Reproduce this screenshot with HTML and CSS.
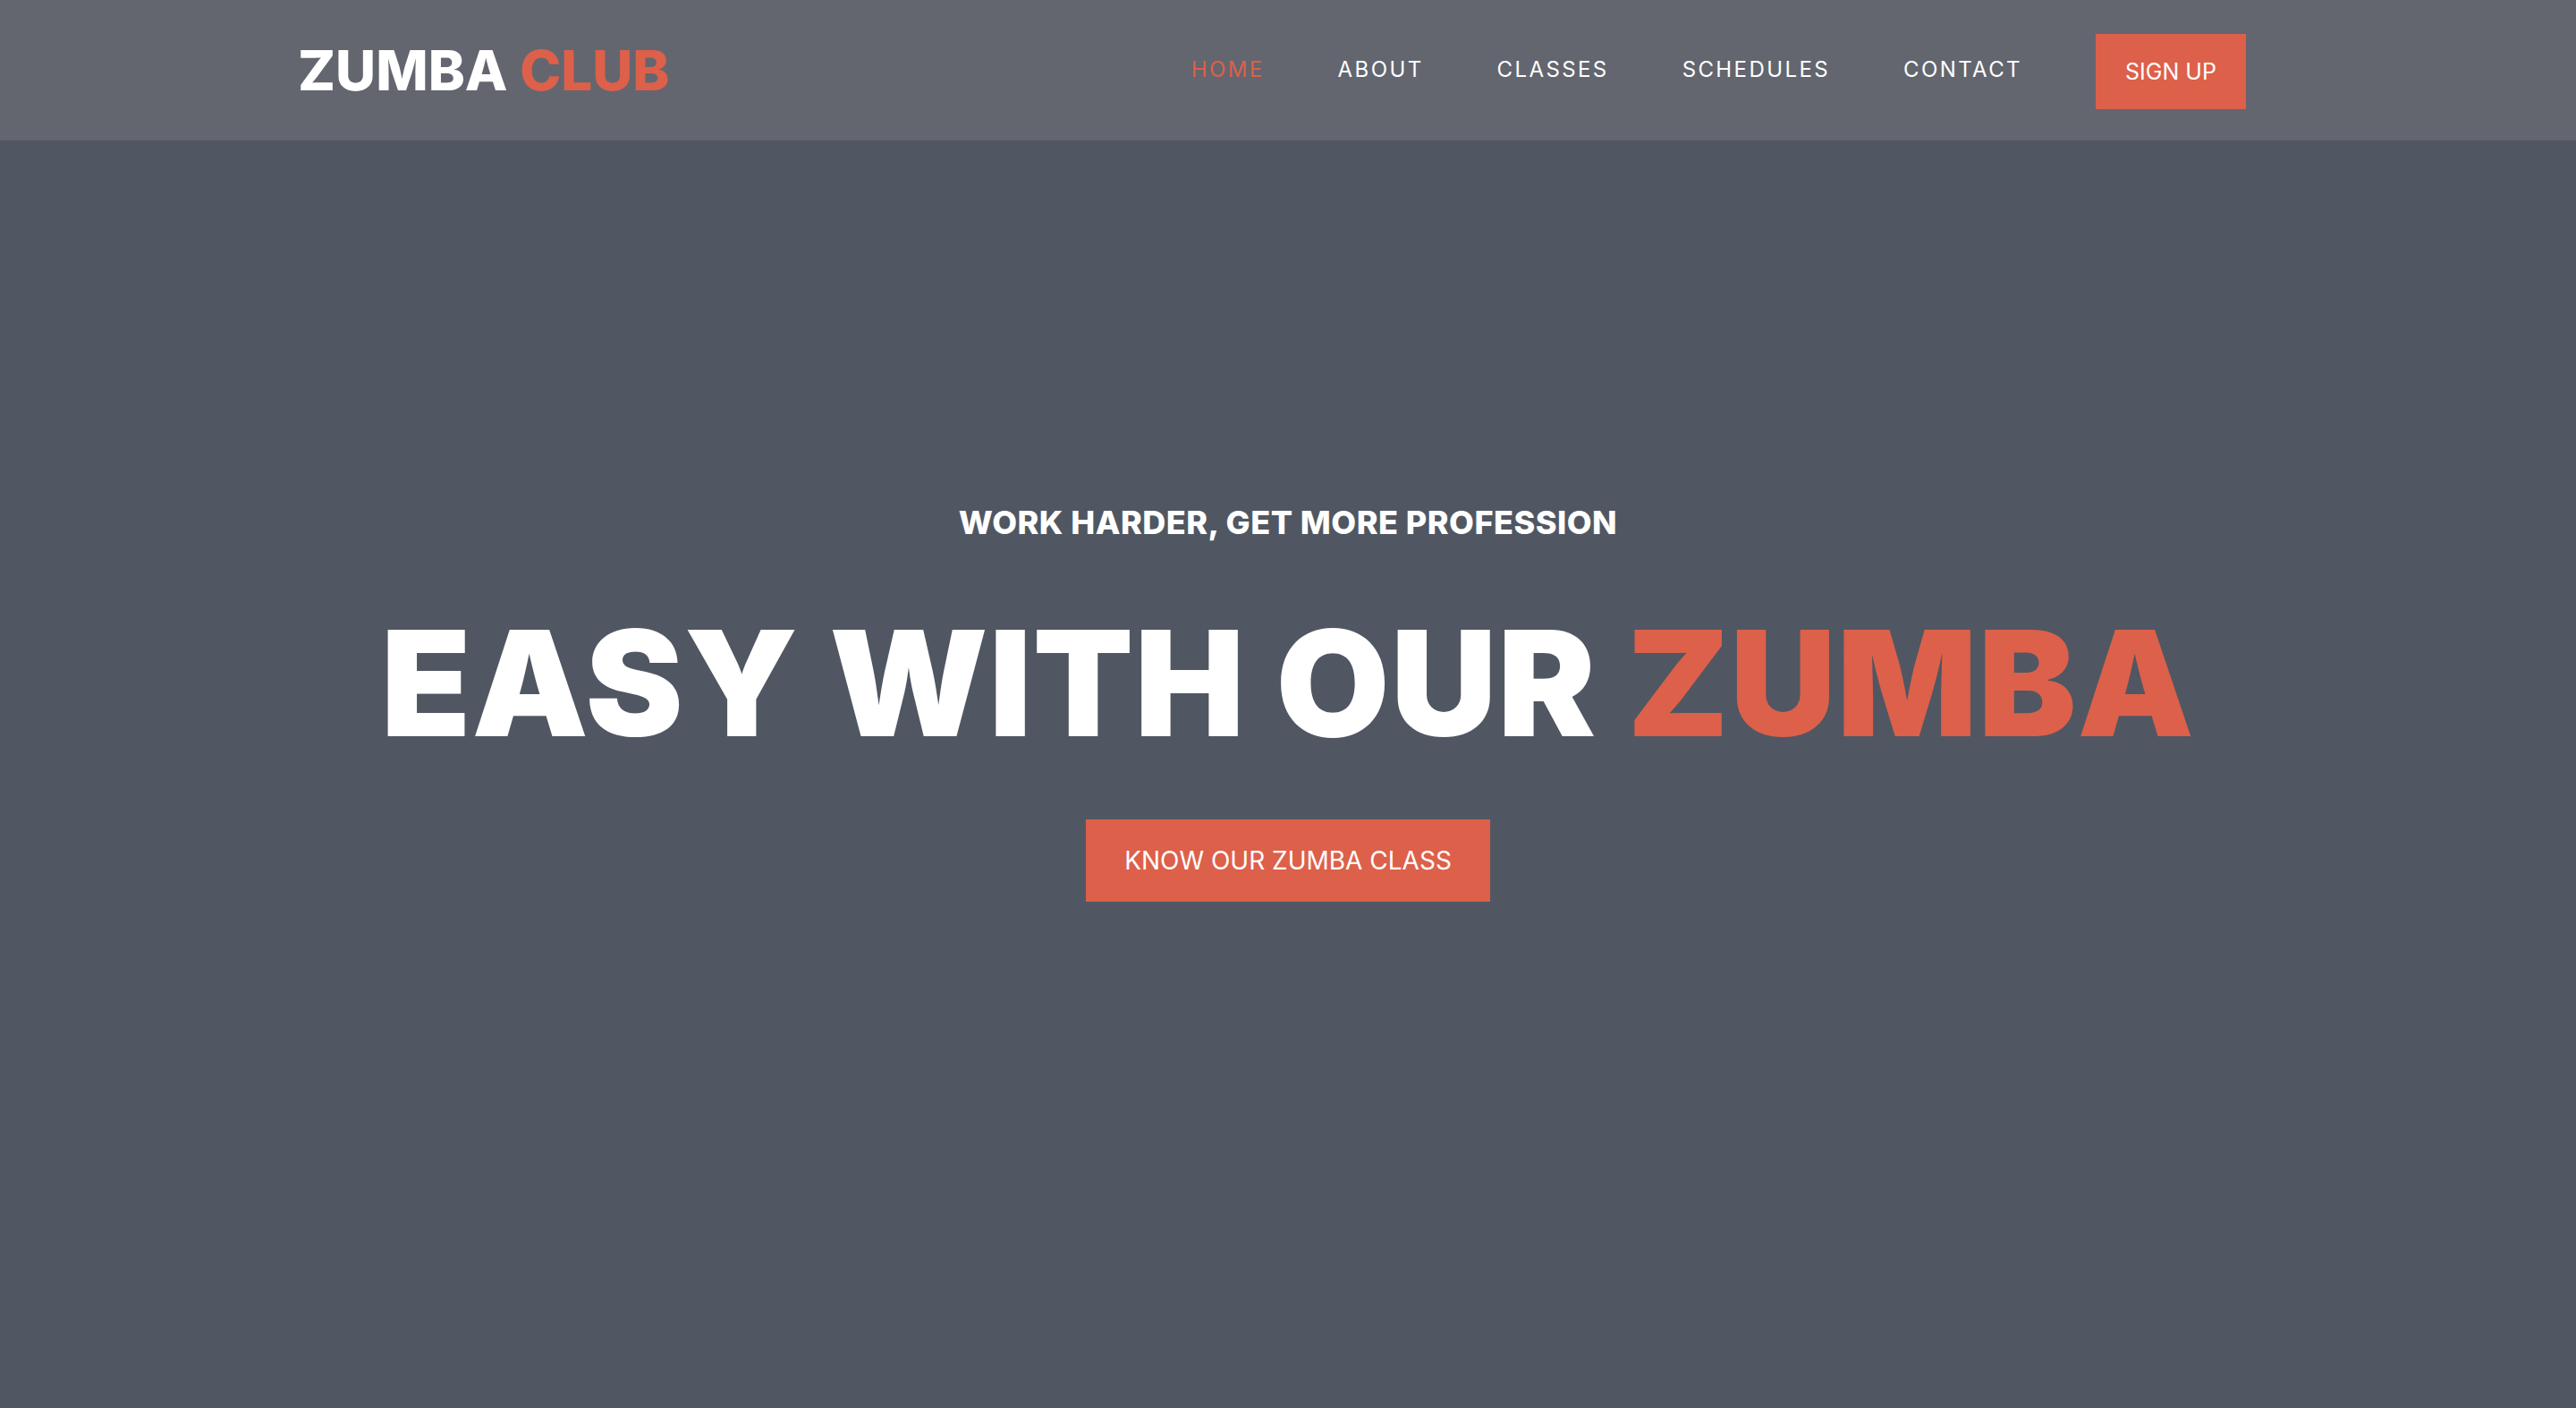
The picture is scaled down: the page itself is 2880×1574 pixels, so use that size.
FILE: index.html
```html
<!DOCTYPE html>
<html lang="en">
<head>
<meta charset="utf-8">
<title>Zumba Club</title>
<link rel="stylesheet" href="styles.css">
</head>
<body>
<header class="header">
  <div class="logo">ZUMBA <span class="accent">CLUB</span></div>
  <nav class="nav">
    <a class="nav-link active" href="#">HOME</a>
    <a class="nav-link" href="#">ABOUT</a>
    <a class="nav-link" href="#">CLASSES</a>
    <a class="nav-link" href="#">SCHEDULES</a>
    <a class="nav-link" href="#">CONTACT</a>
    <a class="signup" href="#">SIGN UP</a>
  </nav>
</header>
<main class="hero">
  <p class="hero-sub">WORK HARDER, GET MORE PROFESSION</p>
  <h1 class="hero-title">EASY WITH OUR <span class="accent">ZUMBA</span></h1>
  <a class="hero-btn" href="#">KNOW OUR ZUMBA CLASS</a>
</main>
</body>
</html>
```

FILE: styles.css
```css
* { box-sizing: border-box; }
html, body { margin: 0; padding: 0; }
body {
  background: #505762;
  font-family: Inter, "Open Sans", sans-serif;
  color: #fff;
  min-height: 1574px;
}
.accent { color: #dd604a; }
.header {
  background: #63666f;
  height: 157px;
  display: flex;
  align-items: center;
  justify-content: space-between;
  padding: 0 369px 0 333px;
}
.logo {
  font-size: 62px;
  font-weight: 800;
  letter-spacing: 0;
  line-height: 1;
  white-space: nowrap;
}
.nav {
  display: flex;
  align-items: center;
  gap: 82px;
}
.nav-link {
  color: #fff;
  text-decoration: none;
  font-size: 24px;
  font-weight: 400;
  letter-spacing: 2.4px;
  margin-top: -2px;
}
.nav-link.active { color: #dd604a; }
.signup {
  background: #dd604a;
  color: #fff;
  text-decoration: none;
  font-size: 25px;
  width: 168px;
  height: 84px;
  display: flex;
  align-items: center;
  justify-content: center;
  margin-top: 3px;
}
.hero {
  display: flex;
  flex-direction: column;
  align-items: center;
  padding-top: 409px;
}
.hero-sub {
  margin: 0;
  font-size: 36px;
  font-weight: 800;
  line-height: 1;
  letter-spacing: 0.5px;
}
.hero-title {
  margin: 80px 0 0;
  font-size: 164px;
  font-weight: 900;
  line-height: 1;
  letter-spacing: 1.2px;
  white-space: nowrap;
}
.hero-btn {
  margin-top: 70px;
  background: #dd604a;
  color: #fff;
  text-decoration: none;
  font-size: 28px;
  width: 452px;
  height: 92px;
  display: flex;
  align-items: center;
  justify-content: center;
  letter-spacing: 0;
}
```
